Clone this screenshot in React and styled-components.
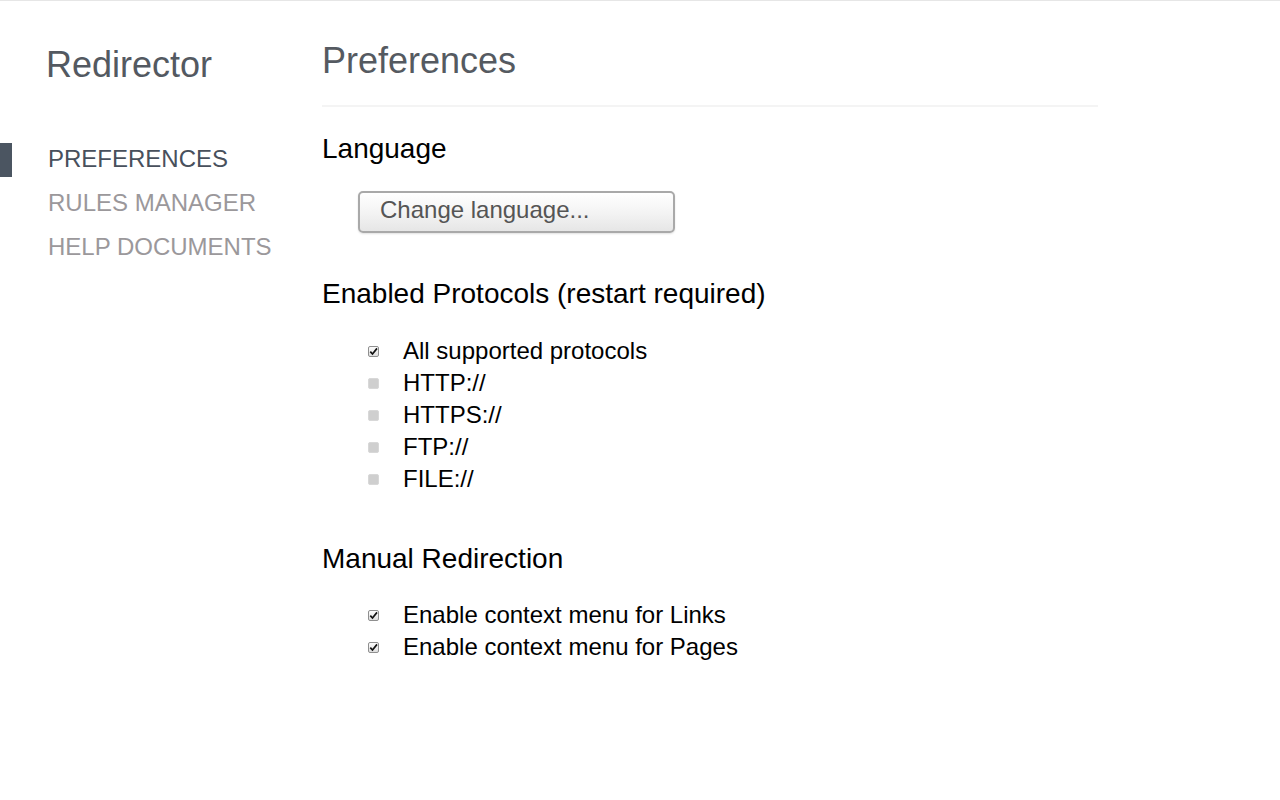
import React from "react";
import styled, { createGlobalStyle } from "styled-components";

const Global = createGlobalStyle`
  html, body { margin: 0; padding: 0; background: #fff; }
  body { font-family: "Liberation Sans", Arial, sans-serif; }
`;

const Page = styled.div`
  display: flex;
  min-height: 800px;
  border-top: 1px solid #e6e6e6;
  box-sizing: border-box;
`;

const Sidebar = styled.nav`
  width: 322px;
  flex: none;
  padding-top: 43.5px;
  box-sizing: border-box;
`;

const Brand = styled.div`
  font-size: 36px;
  line-height: 40px;
  color: #535961;
  padding-left: 46px;
  margin-bottom: 52px;
`;

const NavList = styled.ul`
  list-style: none;
  margin: 0;
  padding: 0;
`;

const NavItem = styled.li`
  position: relative;
  font-size: 24px;
  line-height: 44px;
  height: 44px;
  padding-left: 48px;
  color: ${(p) => (p.$active ? "#48505c" : "#9b989b")};
  &::before {
    content: "";
    display: ${(p) => (p.$active ? "block" : "none")};
    position: absolute;
    left: 0;
    top: 6px;
    width: 12px;
    height: 34px;
    background: #4b5561;
  }
`;

const Main = styled.main`
  width: 776px;
  padding-top: 39.5px;
`;

const Title = styled.h1`
  margin: 0;
  font-size: 36px;
  line-height: 40px;
  font-weight: normal;
  color: #555a61;
`;

const Divider = styled.hr`
  margin: 24px 0 0;
  border: none;
  height: 2px;
  background: #f4f4f4;
`;

const Heading = styled.h2`
  margin: ${(p) => p.$gap}px 0 0;
  font-size: 28px;
  line-height: 32px;
  font-weight: normal;
  color: #000;
`;

const Button = styled.button`
  display: block;
  margin: 26px 0 0 36px;
  width: 317px;
  height: 42px;
  box-sizing: border-box;
  padding: 0 0 3px 20px;
  text-align: left;
  font-family: "Liberation Sans", Arial, sans-serif;
  font-size: 24px;
  color: #555;
  border: 2px solid #a9a9a9;
  border-radius: 5px;
  background: linear-gradient(#ffffff, #f4f4f4 50%, #e6e6e6);
  box-shadow: 0 1px 2px rgba(0, 0, 0, 0.12);
`;

const Options = styled.ul`
  list-style: none;
  margin: ${(p) => p.$gap}px 0 0;
  padding: 0;
`;

const Option = styled.li`
  display: flex;
  align-items: center;
  height: 32px;
  font-size: 24px;
  line-height: 32px;
  color: #000;
`;

const Box = styled.span`
  flex: none;
  width: 11px;
  height: 11px;
  margin: 1px 24px 0 46px;
  box-sizing: border-box;
  border-radius: 2px;
  display: flex;
  align-items: center;
  justify-content: center;
  ${(p) =>
    p.$checked
      ? `border: 1px solid #8f8f8f; background: linear-gradient(#fcfcfc, #dedede);`
      : `background: #cfcfcf; border: 1px solid #d8d8d8;`}
`;

const Check = () => (
  <svg width="9" height="9" viewBox="0 0 9 9" style={{ overflow: "visible" }}>
    <path d="M1.3 4.6 L3.5 7 L8 1.4" fill="none" stroke="#111" strokeWidth="1.7" />
  </svg>
);

const Item = ({ checked, children }) => (
  <Option>
    <Box $checked={checked}>{checked && <Check />}</Box>
    {children}
  </Option>
);

export default function App() {
  return (
    <>
      <Global />
      <Page>
        <Sidebar>
          <Brand>Redirector</Brand>
          <NavList>
            <NavItem $active>PREFERENCES</NavItem>
            <NavItem>RULES MANAGER</NavItem>
            <NavItem>HELP DOCUMENTS</NavItem>
          </NavList>
        </Sidebar>
        <Main>
          <Title>Preferences</Title>
          <Divider />
          <Heading $gap={26}>Language</Heading>
          <Button>Change language...</Button>
          <Heading $gap={45}>Enabled Protocols (restart required)</Heading>
          <Options $gap={25}>
            <Item checked>All supported protocols</Item>
            <Item>HTTP://</Item>
            <Item>HTTPS://</Item>
            <Item>FTP://</Item>
            <Item>FILE://</Item>
          </Options>
          <Heading $gap={48}>Manual Redirection</Heading>
          <Options $gap={24}>
            <Item checked>Enable context menu for Links</Item>
            <Item checked>Enable context menu for Pages</Item>
          </Options>
        </Main>
      </Page>
    </>
  );
}
